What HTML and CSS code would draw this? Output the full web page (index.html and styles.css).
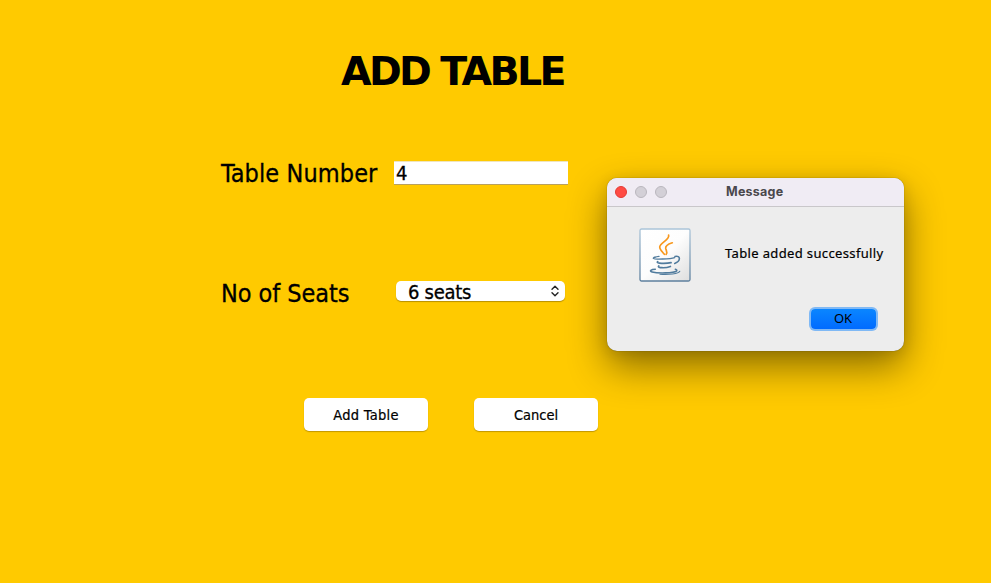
FILE: index.html
```
<!DOCTYPE html>
<html lang="en">
<head>
<meta charset="utf-8">
<title>Add Table</title>
<link rel="stylesheet" href="styles.css">
</head>
<body>
<main class="page">
  <h1 class="title"><span>ADD TABLE</span></h1>
  <div class="row">
    <label class="label number-label" for="number">Table Number</label>
    <input class="field" id="number" type="text" value="4">
  </div>
  <div class="row seats-row">
    <span class="label seats-label">No of Seats</span>
    <div class="select"><span>6 seats</span>
      <svg width="10" height="14" viewBox="0 0 10 14"><path d="M2 5.2 5 2.2 8 5.2M2 8.8 5 11.8 8 8.8"/></svg>
    </div>
  </div>
  <div class="actions">
    <button class="btn add">Add Table</button>
    <button class="btn cancel">Cancel</button>
  </div>
</main>
<section class="dialog" role="dialog" aria-label="Message">
  <header class="bar">
    <i class="dot close"></i><i class="dot"></i><i class="dot"></i>
    <span class="bar-title">Message</span>
  </header>
  <div class="body">
    <svg class="java" width="52" height="54" viewBox="0 0 52 54">
      <defs>
        <linearGradient id="bg" x1="0" y1="0" x2="1" y2="1"><stop offset="0" stop-color="#fff"/><stop offset=".5" stop-color="#fdfdfd"/><stop offset="1" stop-color="#dedede"/></linearGradient>
        <linearGradient id="edge" x1="0" y1="0" x2="0" y2="1"><stop offset="0" stop-color="#abc5d9"/><stop offset="1" stop-color="#5d7f9d"/></linearGradient>
      </defs>
      <rect x="1" y="1" width="50" height="52" rx="1.5" fill="url(#bg)" stroke="url(#edge)" stroke-width="1.3"/>
      <g fill="none" stroke="#f8981d" stroke-linecap="round" stroke-linejoin="round">
        <path stroke-width="1.700" d="M29.600 7c1.500 5-8.600 7.400-8.900 12 0 2.700 2.700 4.900 4.700 7.300"/>
        <path stroke-width="1.700" d="M33.300 14.800c-3.800 1.200-7 3.300-6.600 5.600.4 2 2.200 3.800.4 6"/>
      </g>
      <g fill="none" stroke="#507b9d" stroke-linecap="round">
        <path stroke-width="1.400" d="M20 28.400c-3.200.4-6 1.300-5.700 1.900.5 1.200 17 1 21.300-.6"/>
        <path stroke-width="1.600" d="M36 28.500c5.800-1.500 6 4.800-.3 7"/>
        <path stroke-width="1.700" d="M18.700 33.600c-2.600 2.100 8.300 2.200 13.400 1"/>
        <path stroke-width="1.700" d="M19.700 38c-1.800 2 6.600 2.400 11.700.5"/>
        <path stroke-width="1.600" d="M16.300 41.300c-4.200 0-6.500 1.700-3.200 2.600 6 1.700 21.800 1.200 24.400-.8.8-.7-.1-1.500-1.100-1.800"/>
        <path stroke-width="1.100" d="M21 46.300c8.500.6 18.500-.4 19.800-3"/>
      </g>
    </svg>
    <p class="msg">Table added successfully</p>
    <button class="ok">OK</button>
  </div>
</section>
</body>
</html>
```
FILE: styles.css
```
* { box-sizing: border-box; }
body {
  margin: 0;
  height: 583px;
  overflow: hidden;
  background: #ffca00;
  color: #000;
  font-family: "DejaVu Sans Condensed", "DejaVu Sans", sans-serif;
  font-stretch: condensed;
}
.page { padding: 47px 0 0 221px; }
.title {
  margin: 0 0 0 120px; height: 49px; font-family: "DejaVu Sans", sans-serif; font-stretch: normal;
  font-size: 39.5px; line-height: 49px; white-space: nowrap; letter-spacing: -2.65px;
}
.row { display: flex; height: 30px; margin-top: 62px; align-items: center; }
.seats-row { margin-top: 90px; }
.label {
  width: 173px; flex: none; padding-top: 2px; font-size: 25px; line-height: 30px; white-space: nowrap;
  -webkit-text-stroke: 0.3px #000;
}
.number-label { letter-spacing: 0.1px; }
.seats-label { width: 175px; letter-spacing: -0.05px; }
.field {
  width: 174px; height: 24px; padding: 0 2px; border: 0; border-radius: 0;
  border-top: 1px solid #f0e5bd; border-bottom: 1px solid #b9a15c;
  background: #fff; font: inherit; font-size: 20px; color: #000; outline: 0;
  -webkit-text-stroke: 0.3px #000;
}
.select {
  display: flex; align-items: center; justify-content: space-between;
  width: 169px; height: 20px; margin-top: -4px; padding: 0 5px 0 12px;
  background: #fff; border-radius: 5px; box-shadow: 0 1px 1px rgba(80, 60, 0, .4);
  font-size: 20px; line-height: 20px; letter-spacing: -0.3px; white-space: nowrap;
  -webkit-text-stroke: 0.3px #000;
}
.select span { padding-top: 2px; }
.select svg { fill: none; stroke: #222; stroke-width: 1.4; stroke-linecap: round; stroke-linejoin: round; }
.actions { display: flex; gap: 46px; margin: 90px 0 0 83px; }
.btn {
  width: 124px; height: 33px; padding: 0; border: 0; border-radius: 5px; background: #fff;
  box-shadow: 0 1px 1px rgba(80, 60, 0, .35); color: #000; font: inherit; font-size: 14.5px;
  -webkit-text-stroke: 0.2px #000;
}
.add { letter-spacing: 0.3px; }
.dialog {
  position: absolute; left: 607px; top: 178px; width: 297px; height: 173px;
  border-radius: 10px; background: #ededed;
  box-shadow: 0 0 1px rgba(0, 0, 0, .6), 0 16px 38px rgba(0, 0, 0, .45), 0 2px 14px rgba(0, 0, 0, .1);
}
.bar {
  position: relative; display: flex; align-items: center; gap: 8px; height: 29px; padding: 0 8px;
  border-radius: 10px 10px 0 0; background: #f0ecf4; border-bottom: 1px solid #c9c7ca;
}
.dot { width: 12px; height: 12px; border-radius: 50%; background: #d3d0d7; border: 1px solid #bab7be; }
.close { background: #ff4b44; border-color: #e43a34; }
.bar-title { margin-left: 51px; font: bold 12.5px/16px Inter, sans-serif; letter-spacing: 0.25px; color: #4a484c; }
.body { display: grid; grid-template-columns: 86px 1fr; padding: 21px 20px 0 32px; }
.java { display: block; }
.msg {
  margin: 17px 0 0; font: 13px/16px "Noto Sans", sans-serif; letter-spacing: 0.36px; white-space: nowrap;
  -webkit-text-stroke: 0.2px #000;
}
.ok {
  grid-column: 2; justify-self: end; width: 65px; height: 20px; margin: 27px 8px 0 0; padding: 0 1px 2px 0;
  border: 0; border-radius: 4px; background: linear-gradient(#0a86ff, #006bff);
  box-shadow: 0 0 0 2px #80b9f5; color: #000; font: 13px/18px "Noto Sans", sans-serif;
}
```
